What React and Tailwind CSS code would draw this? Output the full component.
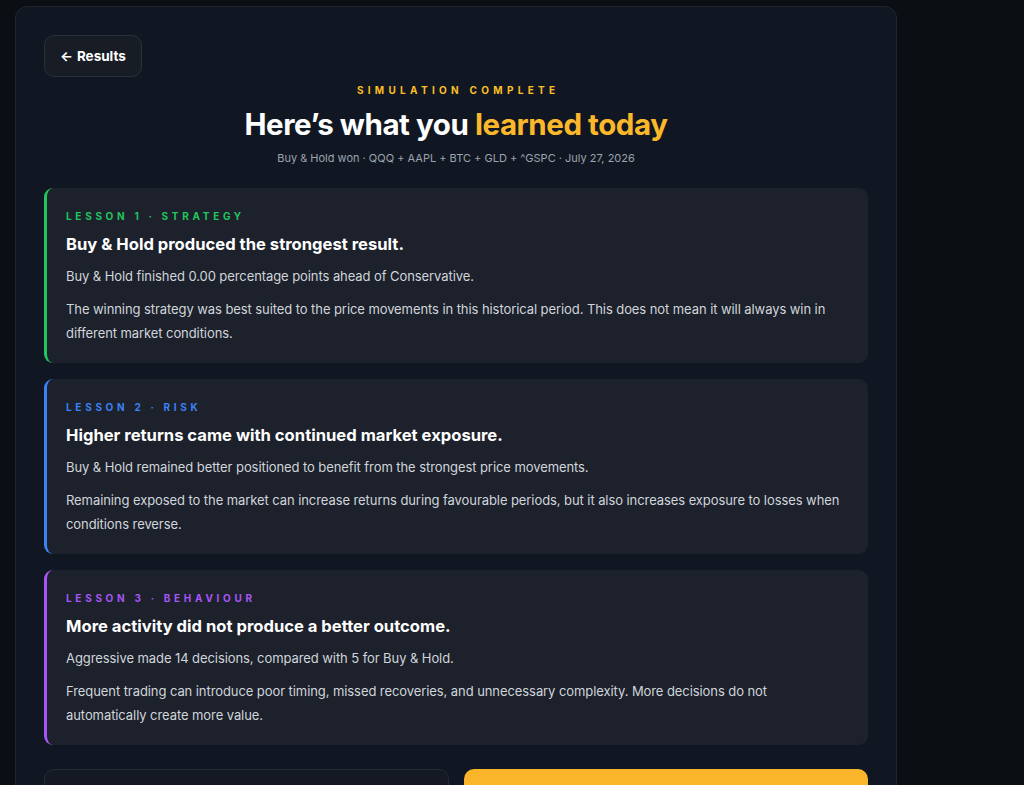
import React from 'react';

const lessons = [
  {
    label: 'Lesson 1 · Strategy',
    accent: 'border-[#22c55e]',
    text: 'text-[#22c55e]',
    title: 'Buy & Hold produced the strongest result.',
    lines: [
      'Buy & Hold finished 0.00 percentage points ahead of Conservative.',
      'The winning strategy was best suited to the price movements in this historical period. This does not mean it will always win in different market conditions.',
    ],
  },
  {
    label: 'Lesson 2 · Risk',
    accent: 'border-[#3b82f6]',
    text: 'text-[#3b82f6]',
    title: 'Higher returns came with continued market exposure.',
    lines: [
      'Buy & Hold remained better positioned to benefit from the strongest price movements.',
      'Remaining exposed to the market can increase returns during favourable periods, but it also increases exposure to losses when conditions reverse.',
    ],
  },
  {
    label: 'Lesson 3 · Behaviour',
    accent: 'border-[#a855f7]',
    text: 'text-[#a855f7]',
    title: 'More activity did not produce a better outcome.',
    lines: [
      'Aggressive made 14 decisions, compared with 5 for Buy & Hold.',
      'Frequent trading can introduce poor timing, missed recoveries, and unnecessary complexity. More decisions do not automatically create more value.',
    ],
  },
];

const LessonCard = ({ lesson }) => (
  <div className={`bg-[#1c212b] border-l-[3px] ${lesson.accent} rounded-[9px] pl-[19px] pr-5 pt-[21px] pb-[18px]`}>
    <div className={`text-[10px] leading-[15px] font-bold uppercase tracking-[0.37em] ${lesson.text}`}>
      {lesson.label}
    </div>
    <h3 className="mt-2 text-[16.6px] leading-6 font-bold text-white">{lesson.title}</h3>
    <p className="mt-2 text-[13px] leading-6 text-[#d1d5db] tracking-[-0.006em]">{lesson.lines[0]}</p>
    <p className="mt-[9px] text-[13px] leading-6 text-[#d1d5db] tracking-[-0.006em]">{lesson.lines[1]}</p>
  </div>
);

export default function App() {
  return (
    <div className="min-h-screen bg-[#0b0e13] pl-[15px] pt-[6px] font-['Inter','Noto_Sans',sans-serif] overflow-hidden">
      <div className="w-[882px] bg-[#111722] border border-[#1f242d] rounded-[12px] px-7 pt-7 pb-8">
        <button className="h-[42px] px-[15px] rounded-[10px] border border-[#2a2f3a] bg-[#181c25] text-white text-[13.5px] font-bold flex items-center gap-1 pt-px">
          <span className="leading-none">←</span>
          <span>Results</span>
        </button>

        <div className="text-center mt-[6px]">
          <div className="text-[10px] leading-[15px] font-bold uppercase tracking-[0.43em] text-[#fbbf24] pl-[0.43em]">
            Simulation complete
          </div>
          <h1 className="mt-[9px] text-[29.5px] leading-[34px] font-bold tracking-[-0.015em] text-white">
            Here’s what you <span className="text-[#fbb82a]">learned today</span>
          </h1>
          <p className="mt-[9px] text-[11px] leading-4 text-[#9ca3af]">
            Buy &amp; Hold won · QQQ + AAPL + BTC + GLD + ^GSPC · July 27, 2026
          </p>
        </div>

        <div className="mt-[22px] flex flex-col gap-4">
          {lessons.map((l) => (
            <LessonCard key={l.label} lesson={l} />
          ))}
        </div>

        <div className="mt-6 grid grid-cols-2 gap-[15px]">
          <button className="h-[64px] rounded-[10px] border border-[#262b35] bg-[#141923] text-white text-sm font-semibold">
            Run another simulation
          </button>
          <button className="h-[64px] rounded-[10px] bg-[#fbb52b] text-[#111722] text-sm font-bold">
            Continue
          </button>
        </div>
      </div>
    </div>
  );
}
